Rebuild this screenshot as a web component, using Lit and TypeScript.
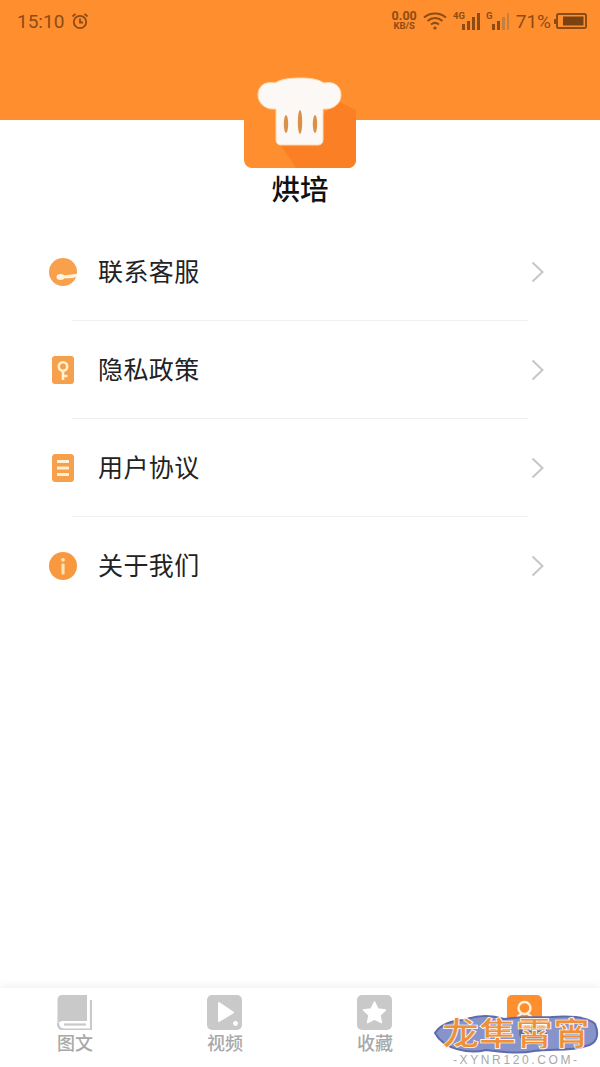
import { LitElement, html, css, svg } from 'lit';
import { customElement } from 'lit/decorators.js';

const menu = [
  {
    label: '联系客服',
    icon: svg`<circle cx="14" cy="14" r="14" fill="#f8a04c"/>
      <ellipse cx="11.5" cy="19" rx="4" ry="3" fill="#fff3de"/>
      <path d="M13 17.8 L28 15.8 V18.4 C24 20.4 18 20.6 13 20.2Z" fill="#fff3de"/>`,
  },
  {
    label: '隐私政策',
    icon: svg`<rect x="3" y="0" width="22" height="28" rx="3" fill="#f6a04e"/>
      <circle cx="14" cy="10.5" r="4.2" fill="none" stroke="#fff0cf" stroke-width="2.6"/>
      <path d="M14 15 V24 M14 20 H18.5" stroke="#fff0cf" stroke-width="2.6" fill="none"/>`,
  },
  {
    label: '用户协议',
    icon: svg`<rect x="3" y="0" width="22" height="28" rx="3.5" fill="#f6a04e"/>
      <path d="M8 7.5 H20 M8 14 H20 M8 20.5 H20" stroke="#fff0cf" stroke-width="3" fill="none"/>`,
  },
  {
    label: '关于我们',
    icon: svg`<circle cx="14" cy="14" r="14" fill="#f8983f"/>
      <circle cx="14" cy="7.8" r="1.9" fill="#ffe3b5"/>
      <rect x="12.4" y="11.5" width="3.2" height="11" rx="1" fill="#ffe3b5"/>`,
  },
];

const tabs = [
  {
    label: '图文',
    icon: svg`<path d="M5 0 H30 V26 H7 C3 26 0.5 28 0.5 30 V5 C0.5 2 2 0 5 0Z" fill="#c9c9c9"/>
      <path d="M1 28 C1 32 3 34.5 7 34.5 H34 V5" fill="none" stroke="#c9c9c9" stroke-width="2.2"/>
      <path d="M7 29.5 H29" stroke="#c9c9c9" stroke-width="2.2"/>`,
  },
  {
    label: '视频',
    icon: svg`<rect width="35" height="35" rx="5" fill="#c9c9c9"/>
      <path d="M12 8 L26 17.5 L12 26Z" fill="#fff" stroke="#fff" stroke-width="2" stroke-linejoin="round"/>
      <circle cx="28.5" cy="28.5" r="2.4" fill="#fff"/>`,
  },
  {
    label: '收藏',
    icon: svg`<rect width="35" height="35" rx="5" fill="#c9c9c9"/>
      <path d="M17.5 7 L21 14 L28.5 15 L23 20.2 L24.4 27.6 L17.5 24 L10.6 27.6 L12 20.2 L6.5 15 L14 14Z" fill="#fff" stroke="#fff" stroke-width="1.5" stroke-linejoin="round"/>`,
  },
  {
    label: '我的',
    icon: svg`<rect width="35" height="35" rx="5" fill="#ff8e2f"/>
      <circle cx="17.5" cy="13" r="6" fill="none" stroke="#fff3e2" stroke-width="2.4"/>
      <path d="M8 31 C8 24 11 20.5 14 19 M27 31 C27 24 24 20.5 21 19" fill="none" stroke="#fff3e2" stroke-width="2.4" stroke-linecap="round"/>`,
  },
];

@customElement('app-root')
export class AppRoot extends LitElement {
  static styles = css`
    :host {
      display: flex;
      flex-direction: column;
      position: relative;
      height: 1067px;
      overflow: hidden;
      background: #fff;
      font-family: 'Noto Sans CJK SC', 'Liberation Sans', sans-serif;
    }

    .head {
      height: 120px;
      background: #ff8e2f;
      flex: none;
    }

    .status {
      display: flex;
      align-items: center;
      height: 42px;
      padding: 0 13px 0 17px;
      color: #8d4c14;
      font-family: Roboto, sans-serif;
    }

    .time {
      font-size: 19px;
      margin-right: 7px;
    }

    .grow {
      flex: 1;
    }

    .speed {
      display: flex;
      flex-direction: column;
      align-items: center;
      font-weight: 700;
      line-height: 10px;
      margin-right: 6px;
      font-size: 12.5px;
    }

    .speed small {
      font-size: 9.5px;
    }

    .sig-a {
      margin-left: 6px;
    }

    .sig-b {
      margin-left: 3px;
    }

    .pct {
      font-size: 19px;
      margin: 0 3px 0 4px;
    }

    .brand {
      display: flex;
      flex-direction: column;
      align-items: center;
      margin-top: -64px;
      flex: none;
    }

    .brand svg {
      display: block;
    }

    .name {
      font-size: 28.5px;
      font-weight: 500;
      line-height: 40px;
      color: #111;
    }

    .menu {
      margin-top: 15px;
      flex: none;
    }

    .row {
      display: flex;
      align-items: center;
      height: 97px;
      padding: 0 56px 0 49px;
    }

    .row svg.ic {
      width: 28px;
      height: 28px;
      margin-right: 21px;
    }

    .row span {
      flex: 1;
      font-size: 25px;
      letter-spacing: 0.4px;
      color: #222;
      margin-bottom: 4px;
    }

    .line {
      height: 1px;
      margin: 0 72px;
      background: #efefef;
    }

    .tabs {
      display: grid;
      grid-template-columns: repeat(4, 1fr);
      height: 79px;
      padding-top: 7px;
      box-sizing: border-box;
      background: #fff;
      box-shadow: 0 -3px 8px rgba(0, 0, 0, 0.05);
      flex: none;
    }

    .tab {
      display: flex;
      flex-direction: column;
      align-items: center;
      font-size: 18px;
      line-height: 24px;
      font-weight: 500;
      color: #a8a8a8;
    }

    .tab svg {
      width: 35px;
      height: 35px;
      margin-left: -1px;
    }

    .mark {
      position: absolute;
      left: 430px;
      top: 1012px;
    }
  `;

  render() {
    return html`
      <div class="head">
        <div class="status">
          <span class="time">15:10</span>
          <svg width="18" height="18" viewBox="0 0 18 18" fill="none" stroke="#8d4c14" stroke-width="1.8">
            <circle cx="9" cy="10" r="6.2" />
            <path d="M9 6.5 V10.5 H12 M1.5 4.5 L4.5 1.8 M16.5 4.5 L13.5 1.8" />
          </svg>
          <div class="grow"></div>
          <div class="speed">0.00<small>KB/S</small></div>
          <svg width="24" height="18" viewBox="0 0 24 18" fill="none" stroke="#8d4c14" stroke-width="2">
            <path d="M1 5.5 C7 0 17 0 23 5.5 M4.5 9 C9 5 15 5 19.5 9 M8 12.5 C10.5 10.5 13.5 10.5 16 12.5" />
            <circle cx="12" cy="16" r="1.6" fill="#8d4c14" stroke="none" />
          </svg>
          <svg class="sig-a" width="30" height="20" viewBox="0 0 30 20">
            <text x="0" y="8" font-size="9.5" font-weight="700" fill="#8d4c14" font-family="Roboto">4G</text>
            <path d="M9 13h3v6H9zM14 10h3v9h-3zM19 6h3v13h-3zM24 2h3v17h-3z" fill="#8d4c14" />
          </svg>
          <svg class="sig-b" width="26" height="20" viewBox="0 0 26 20">
            <text x="0" y="8" font-size="9.5" font-weight="700" fill="#8d4c14" font-family="Roboto">G</text>
            <path d="M6 13h3v6H6zM11 10h3v9h-3z" fill="#8d4c14" />
            <path d="M16 6h3v13h-3zM21 2h2v17h-2z" fill="#c5803f" />
          </svg>
          <span class="pct">71%</span>
          <svg width="33" height="16" viewBox="0 0 33 16">
            <path d="M0 6h2v5H0z" fill="#8d4c14" />
            <rect x="3" y="1" width="29" height="14" rx="1.5" fill="none" stroke="#8d4c14" stroke-width="2" />
            <rect x="9" y="3.5" width="20.5" height="9" fill="#7a4212" />
          </svg>
        </div>
      </div>

      <div class="brand">
        <svg width="112" height="112" viewBox="0 0 112 112">
          <path d="M0 0 H112 V104 A8 8 0 0 1 104 112 H8 A8 8 0 0 1 0 104Z" fill="#ff8e2f" />
          <path d="M96 46 L112 54 V104 A8 8 0 0 1 104 112 H52 L36 88Z" fill="#fb7f25" />
          <path
            d="M32 53 C21 54 14 47 14 39 C14 30 21 25 31 27 C37 23 46 22 56 22 C66 22 74 23 80 27 C90 25 97 30 97 39 C97 47 90 54 79 53 V84 C79 87 77 89 74 89 H37 C34 89 32 87 32 84Z"
            fill="#fbf8f5"
            stroke="#ffd9b0"
            stroke-width="1"
          />
          <g fill="#d9914a">
            <ellipse cx="42" cy="68" rx="2.2" ry="9" />
            <ellipse cx="56" cy="66" rx="2.2" ry="12" />
            <ellipse cx="71" cy="68" rx="2.2" ry="9" />
          </g>
        </svg>
        <div class="name">烘培</div>
      </div>

      <div class="menu">
        ${menu.map(
          (item, i) => html`
            <div class="row">
              <svg class="ic" viewBox="0 0 28 28">${item.icon}</svg>
              <span>${item.label}</span>
              <svg width="13" height="22" viewBox="0 0 13 22" fill="none" stroke="#c6c6c6" stroke-width="2">
                <path d="M1.5 1.5 L11.5 11 L1.5 20.5" />
              </svg>
            </div>
            ${i < menu.length - 1 ? html`<div class="line"></div>` : ''}
          `
        )}
      </div>

      <div class="grow"></div>

      <div class="tabs">
        ${tabs.map(
          tab => html`
            <div class="tab">
              <svg viewBox="0 0 35 35">${tab.icon}</svg>
              ${tab.label}
            </div>
          `
        )}
      </div>

      <svg class="mark" width="170" height="55" viewBox="0 0 170 55">
        <path
          d="M5 21 C10 13 22 8 34 8 C50 2 62 3 74 7 C90 4 110 6 122 5 C138 4 158 5 165 12 C170 24 166 32 156 34 C140 40 120 36 104 39 C90 42 70 40 56 38 C40 42 14 38 5 21Z"
          fill="#8794cc"
          stroke="#5f6ba8"
          stroke-width="2"
        />
        <ellipse cx="103" cy="20" rx="14" ry="13" fill="#4c4650" opacity="0.55" />
        <text
          x="12"
          y="33"
          font-size="32"
          font-weight="700"
          fill="#ef8f38"
          stroke="#fff"
          stroke-width="0.7"
          textLength="148"
          lengthAdjust="spacingAndGlyphs"
          font-family="Noto Sans CJK SC"
        >龙隼霄宵</text>
        <text x="23" y="52" font-size="12" fill="#a8a8a8" textLength="124" font-family="Liberation Sans">-XYNR120.COM-</text>
      </svg>
    `;
  }
}
